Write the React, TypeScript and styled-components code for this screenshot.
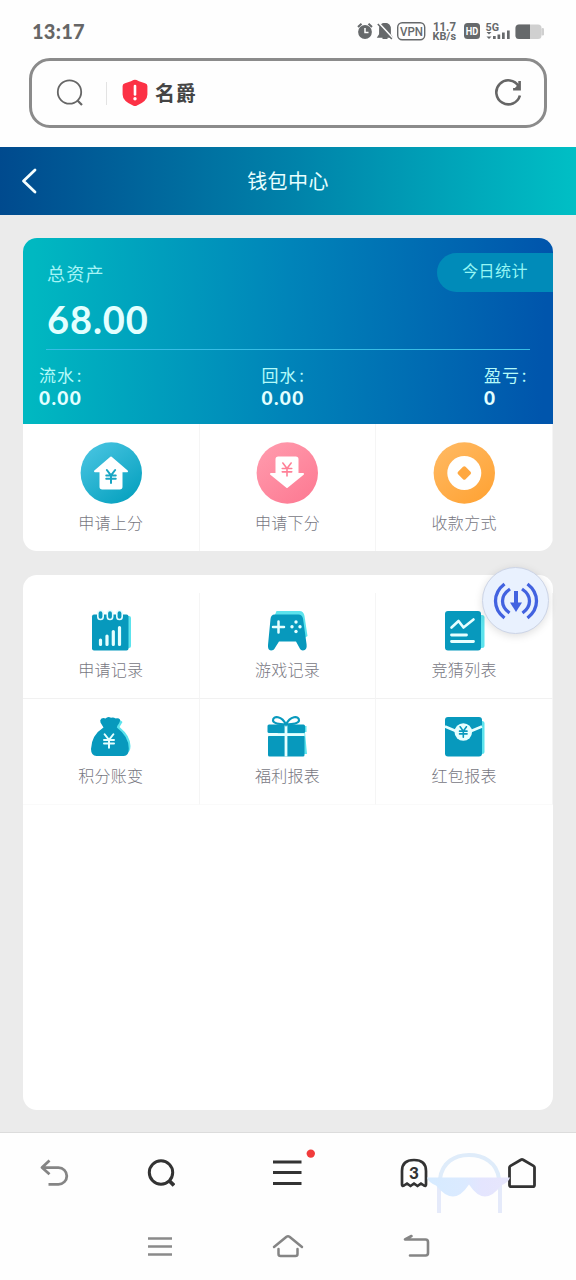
import React from "react";
import styled, { createGlobalStyle } from "styled-components";

const cjk = `"Noto Sans CJK SC", sans-serif`;

const GlobalStyle = createGlobalStyle`
  * { box-sizing: border-box; }
  body { margin: 0; background: #fff; font-family: ${cjk}; }
  svg { display: block; flex: none; }
`;

const Screen = styled.div`
  width: 576px;
  height: 1280px;
  display: flex;
  flex-direction: column;
  overflow: hidden;
  background: #fefefe;
`;

const StatusBar = styled.header`
  height: 58px;
  padding: 4px 31px 0 32px;
  display: flex;
  align-items: center;
  justify-content: space-between;
  color: #666;
`;

const Clock = styled.span`
  font: 900 20px/24px Lato, sans-serif;
  letter-spacing: 0.25px;
  padding-bottom: 1px;
`;

const AddressBar = styled.div`
  height: 70px;
  margin: 0 29px 19px;
  padding: 0 20px 0 24px;
  border: 3px solid #8b8b8b;
  border-radius: 21px;
  display: flex;
  align-items: center;
`;

const Separator = styled.i`
  width: 1px;
  height: 23px;
  margin: 0 15px 0 21px;
  background: #e3e3e3;
`;

const SiteName = styled.span`
  flex: 1;
  margin-left: 7px;
  font: 700 20px/30px ${cjk};
  letter-spacing: 0.8px;
  color: #454545;
`;

const TitleBar = styled.div`
  height: 68px;
  padding: 0 21px;
  display: grid;
  grid-template-columns: 40px 1fr 40px;
  align-items: center;
  background: linear-gradient(90deg, #004a8e 0%, #0081a9 50%, #00bfc5 100%);
`;

const Title = styled.h1`
  margin: 0;
  text-align: center;
  font: 400 20px/30px ${cjk};
  letter-spacing: 0.4px;
  color: #e8ffff;
`;

const Content = styled.main`
  height: 918px;
  padding: 23px 23px 22px;
  display: flex;
  flex-direction: column;
  gap: 24px;
  background: #ebebeb;
  border-bottom: 1px solid #dcdcdc;
`;

const Card = styled.section<{ $grow?: boolean }>`
  position: relative;
  border-radius: 14px;
  background: #fff;
  ${(p) => (p.$grow ? "flex: 1; padding-top: 18px;" : "height: 313px; overflow: hidden;")}
`;

const Balance = styled.div`
  position: relative;
  height: 186px;
  padding: 22px 23px 0;
  background: linear-gradient(92deg, #00b8c1 2%, #0084b9 50%, #0055ac 98%);
`;

const BalanceLabel = styled.div`
  padding-left: 1px;
  font: 400 18px/26px ${cjk};
  letter-spacing: 1.2px;
  color: #a5f4f6;
`;

const BalanceValue = styled.div`
  height: 64px;
  padding: 12px 0 0 1px;
  border-bottom: 1px solid #38bde5;
  font: 700 38px/42px Lato, sans-serif;
  letter-spacing: 0.9px;
  color: #e3ffff;
`;

const TodayButton = styled.button`
  position: absolute;
  top: 15px;
  right: 0;
  width: 116px;
  height: 39px;
  padding: 0 0 6px;
  border: 0;
  border-radius: 20px 0 0 20px;
  background: #008bb9;
  color: #95f6f5;
  font: 400 16px/24px ${cjk};
  letter-spacing: 0.4px;
`;

const Stats = styled.div`
  display: flex;
  justify-content: space-between;
  margin: 13px 0 0 -7px;
`;

const Stat = styled.div`
  font: 400 17px/24px ${cjk};
  letter-spacing: 0.9px;
  color: #b4faf9;
  width: 46px;
  white-space: nowrap;
`;

const Colon = styled.span`
  margin-left: 2px;
`;

const StatValue = styled.div`
  font: 900 19px/22px Lato, sans-serif;
  letter-spacing: 1.4px;
  color: #e3ffff;
`;

const TileGrid = styled.div`
  display: grid;
  grid-template-columns: repeat(3, 1fr);
`;

const Tile = styled.div<{ $large?: boolean }>`
  height: ${(p) => (p.$large ? 127 : 106)}px;
  padding-top: ${(p) => (p.$large ? 18 : 16)}px;
  display: flex;
  flex-direction: column;
  align-items: center;
  gap: ${(p) => (p.$large ? 5 : 3)}px;
  border-right: 1px solid #f5f5f5;
  ${(p) => (p.$large ? "" : "border-bottom: 1px solid #f1f1f1;")}
  &:nth-child(n + 4) { border-bottom-color: #fafafa; }
`;

const TileLabel = styled.span`
  font: 300 16px/26px ${cjk};
  letter-spacing: 0.3px;
  color: #77777f;
`;

const FloatingButton = styled.button`
  position: absolute;
  top: -8px;
  right: 4px;
  width: 67px;
  height: 67px;
  padding: 0;
  border: 1px solid #ccd4e6;
  border-radius: 50%;
  display: grid;
  place-items: center;
  background: #e9f1fe;
  box-shadow: 0 2px 8px rgba(0, 0, 0, 0.13);
`;

const Toolbar = styled.nav`
  position: relative;
  height: 79px;
  display: grid;
  grid-template-columns: 108px 106px 146px 107px 110px;
  justify-items: center;
  align-items: center;
`;

const Glasses = styled.svg`
  position: absolute;
  left: 427px;
  top: 18px;
`;

const SystemNav = styled.nav`
  height: 68px;
  padding: 0 96px;
  display: grid;
  grid-template-columns: repeat(3, 1fr);
  justify-items: center;
  align-items: center;
`;

const dark = "#66696b";
const teal = "#0799bd";
const shade = "#5ce3ed";
const pale = "#e6ffff";

function StatusIcons() {
  return (
    <svg width="188" height="22" viewBox="357 20 188 22">
      <g fill={dark} stroke={dark}>
        <circle cx="365" cy="32" r="6.900" stroke="none" />
        <path d="M358 27l3.500-3.200M372 27l-3.500-3.200" strokeWidth="2" />
        <path d="M365 28v4.500h3.500" fill="none" stroke="#fff" strokeWidth="1.500" />
        <path d="M385 23.500c-3.800 0-5.200 3-5.200 6v5l-1.700 2.500h13.800l-1.700-2.500v-5c0-3-1.400-6-5.200-6zM382.500 38.200h5" strokeWidth="1.400" />
        <path d="M379 23.500l13.500 14.500" stroke="#fff" strokeWidth="2" />
        <path d="M377.800 24l14 15" strokeWidth="1.500" />
        <rect x="397.700" y="22.700" width="27" height="17" rx="4.500" fill="none" strokeWidth="1.400" />
      </g>
      <g fill={dark} fontFamily="Roboto" fontWeight="500">
        <text x="400" y="36" fontSize="13" textLength="23" lengthAdjust="spacingAndGlyphs">VPN</text>
        <text x="433" y="30.500" fontSize="12" fontWeight="700" textLength="23" lengthAdjust="spacingAndGlyphs">11.7</text>
        <text x="432.500" y="40" fontSize="10.500" fontWeight="700" textLength="23.500" lengthAdjust="spacingAndGlyphs">KB/s</text>
        <text x="485.500" y="31" fontSize="10" fontWeight="700" textLength="13.500" lengthAdjust="spacingAndGlyphs">5G</text>
      </g>
      <rect x="464" y="23" width="16" height="16" rx="3.500" fill={dark} />
      <text x="465.800" y="34.800" fontFamily="Roboto" fontWeight="700" fontSize="10.500" textLength="12.500" lengthAdjust="spacingAndGlyphs" fill="#fff">HD</text>
      <g fill={dark}>
        <path d="M486.500 32h5l-2.500 2.500zM486.500 36.500h5l-2.500 2.500z" />
        <rect x="493" y="36" width="2.700" height="3" /><rect x="497.500" y="34.500" width="2.700" height="4.500" />
        <rect x="502" y="32.500" width="2.700" height="6.500" /><rect x="507" y="30.500" width="2.700" height="8.500" />
      </g>
      <rect x="515.500" y="24.500" width="26" height="14.500" rx="3.500" fill="#d0d0d0" />
      <rect x="541.500" y="28" width="2.500" height="7.500" rx="1.200" fill="#d0d0d0" />
      <path d="M530 24.500h-11a3.500 3.500 0 0 0-3.500 3.500v7.500a3.500 3.500 0 0 0 3.500 3.500h11z" fill={dark} />
    </svg>
  );
}

/* Currency mark: a forked stem crossed by two bars, centred on (x, y). */
function Yen({ x, y, w, h, color, stroke }: { x: number; y: number; w: number; h: number; color: string; stroke: number }) {
  const l = x - w / 2;
  const r = x + w / 2;
  const top = y - h / 2;
  const fork = y - h * 0.08;
  return (
    <path
      d={`M${l + 0.6} ${top}L${x} ${fork}L${r - 0.6} ${top}M${x} ${fork}V${y + h / 2}M${l} ${fork}H${r}M${l} ${fork + h * 0.26}H${r}`}
      fill="none" stroke={color} strokeWidth={stroke} strokeLinecap="round" strokeLinejoin="round"
    />
  );
}

const disc = (id: string, from: string, to: string, body: React.ReactNode) => (
  <svg width="62" height="62" viewBox="0 0 62 62">
    <defs>
      <linearGradient id={id} x1="0.150" y1="0.100" x2="0.800" y2="0.950">
        <stop stopColor={from} /><stop offset="1" stopColor={to} />
      </linearGradient>
    </defs>
    <circle cx="31.300" cy="31" r="30.700" fill={`url(#${id})`} />
    {body}
  </svg>
);

const deposit = disc("deposit", "#44c2df", "#08a2c0", <>
  <path d="M31 15.500L47 29.300H41.500V44.800q0 1.700-1.700 1.700H22.200q-1.700 0-1.700-1.700V29.300H15z" fill="#fff" stroke="#fff" strokeWidth="2" strokeLinejoin="round" />
  <Yen x={31} y={34.500} w={9.500} h={13} color="#18a5c3" stroke={2} />
</>);

const withdraw = disc("withdraw", "#ff98ab", "#fd7c94", <>
  <path d="M31 45L47 32H41.500V17.200q0-1.700-1.700-1.700H22.200q-1.700 0-1.700 1.700V32H15z" fill="#fff" stroke="#fff" strokeWidth="2" strokeLinejoin="round" />
  <Yen x={31} y={27.500} w={9.500} h={13} color="#ff8097" stroke={1.6} />
</>);

const payment = disc("payment", "#ffb75e", "#ffa437", <>
  <circle cx="31.300" cy="31" r="17" fill="#fff" />
  <rect x="26" y="25.700" width="10.600" height="10.600" rx="1.800" transform="rotate(45 31.300 31)" fill="#ffa840" />
</>);

const Glyph = ({ children }: { children: React.ReactNode }) => (
  <svg width="42" height="44" viewBox="-0.500 0 42 44">{children}</svg>
);

const calendar = <Glyph>
  <rect x="5" y="7" width="35.500" height="32" rx="2" fill={shade} />
  <rect x="1.500" y="5.500" width="36.500" height="36" rx="2" fill={teal} />
  {[10, 19.500, 29].map((x) => <rect key={x} x={x - 2.700} y="1.500" width="5.400" height="9" rx="2.700" fill={teal} stroke="#e5fdff" strokeWidth="1.600" />)}
  <path d="M10 35.500v-4.500M16.500 35.500v-8.500M22.800 35.500v-13M29 35.500v-17" stroke={pale} strokeWidth="3.200" strokeLinecap="round" />
</Glyph>;

const gamepad = <Glyph>
  <path d="M10 2h23q4 0 5 5l3 20-6 4L6 12z" fill={shade} />
  <path d="M8 5.500h24q3.500 0 4.500 4l3.600 26q.700 5.500-3.600 6-2.500 0-4-3.500l-3-5.500h-17l-3.500 5.500Q7.500 41.500 4.500 41.500 1 41 1.500 36L4 10q.500-4.500 4-4.500z" fill={teal} />
  <path d="M12 12.500v11M6.500 18h11" stroke={pale} strokeWidth="2.500" strokeLinecap="round" />
  <g fill={pale}><circle cx="29.500" cy="13" r="1.700" /><circle cx="29.500" cy="22.500" r="1.700" /><circle cx="25.500" cy="17.800" r="1.700" /><circle cx="33.500" cy="17.800" r="1.700" /></g>
</Glyph>;

const chart = <Glyph>
  <rect x="6" y="6" width="35" height="33" rx="2.500" fill={shade} />
  <rect x="1.500" y="2" width="36" height="39.500" rx="3" fill={teal} />
  <path d="M8 18.500l7-6.500 5 6.500 10-8" fill="none" stroke={pale} strokeWidth="2.600" strokeLinecap="round" strokeLinejoin="round" />
  <path d="M8 26h15M8 32.500h22" stroke={pale} strokeWidth="2.800" strokeLinecap="round" />
</Glyph>;

const moneyBag = <Glyph>
  <path d="M14 5q13-4 18 2l-3 5q11 9 11 19 0 7-5 7.500L16 37z" fill={shade} />
  <path d="M13 12.500L10 7.500q-1-2.500 1-4 2-.800 4 0 2.500-2.800 5.500-.700 2.500-1 4.500.700 3-1 4.500 1 .500 2-2.500 6l-.700 2q12 9 12 21 0 7.500-5 7.500H6Q.500 40.500.500 34 1 20 13 12.500z" fill={teal} />
  <Yen x={18.5} y={26} w={10} h={13.5} color={pale} stroke={2} />
</Glyph>;

const gift = <Glyph>
  <path d="M8 11h32v6h-1.500l2 22H20z" fill={shade} />
  <rect x="1" y="9.500" width="37.500" height="8.500" rx="1.500" fill={teal} />
  <rect x="1.500" y="20.500" width="36.500" height="21" rx="1.500" fill={teal} />
  <path d="M1.500 19.600h36.500M19.500 10v31.500" stroke={pale} strokeWidth="2.800" />
  <path d="M19.500 9.500C15.500 1 6.500 0 6.500 5.500q0 3.500 13 4 13-.500 13-4c0-5.500-9-4.500-13 4z" fill="#fff" stroke={teal} strokeWidth="2.200" />
</Glyph>;

const envelope = <Glyph>
  <rect x="6" y="6" width="35" height="33" rx="2.500" fill={shade} />
  <rect x="1.500" y="2" width="37" height="39.500" rx="3" fill={teal} />
  <path d="M1.500 11.500l12 5M38.500 11.500l-12 5" stroke={pale} strokeWidth="2.500" />
  <circle cx="19.800" cy="17" r="8.800" fill={pale} />
  <Yen x={19.8} y={17} w={7.5} h={10.5} color={teal} stroke={1.6} />
</Glyph>;

const actions = [
  { label: "申请上分", icon: deposit },
  { label: "申请下分", icon: withdraw },
  { label: "收款方式", icon: payment },
];

const reports = [
  { label: "申请记录", icon: calendar },
  { label: "游戏记录", icon: gamepad },
  { label: "竞猜列表", icon: chart },
  { label: "积分账变", icon: moneyBag },
  { label: "福利报表", icon: gift },
  { label: "红包报表", icon: envelope },
];

const stats = [
  { label: "流水", value: "0.00" },
  { label: "回水", value: "0.00" },
  { label: "盈亏", value: "0" },
];

export default function App() {
  return (
    <Screen>
      <GlobalStyle />
      <StatusBar>
        <Clock>13:17</Clock>
        <StatusIcons />
      </StatusBar>

      <AddressBar>
        <svg width="29" height="30" viewBox="0 0 29 30" fill="none" stroke="#666" strokeWidth="1.800">
          <circle cx="13.500" cy="14" r="11.700" /><path d="M21.500 22.500l4.500 4.500" strokeWidth="2.200" />
        </svg>
        <Separator />
        <svg width="26" height="28" viewBox="0 0 26 28">
          <path d="M13 .800q1.200 0 4 1.400l6 2q2.400.700 2.400 2.800v8.500q0 6.500-10.400 11-2 1-4 0Q.600 22 .600 15.500V7q0-2.100 2.400-2.800l6-2Q11.800.800 13 .800z" fill="#fc3145" />
          <path d="M13 7v8.500" stroke="#fff" strokeWidth="2.600" strokeLinecap="round" /><circle cx="13" cy="19.700" r="1.700" fill="#fff" />
        </svg>
        <SiteName>名爵</SiteName>
        <svg width="30" height="30" viewBox="0 0 30 30" fill="none" stroke="#666" strokeWidth="2.600">
          <path d="M24.700 8.300A12 12 0 1 0 25.900 17.500" /><path d="M25.600 3v8.200h-6.500" /><path d="M25.500 5v6h-5.500z" fill="#666" stroke="none" />
        </svg>
      </AddressBar>

      <TitleBar>
        <svg width="17" height="26" viewBox="0 0 17 26" fill="none" stroke="#f5ffff" strokeWidth="2.800" strokeLinecap="round" strokeLinejoin="round">
          <path d="M14 2L2.500 13 14 24" />
        </svg>
        <Title>钱包中心</Title>
      </TitleBar>

      <Content>
        <Card>
          <Balance>
            <BalanceLabel>总资产</BalanceLabel>
            <BalanceValue>68.00</BalanceValue>
            <Stats>
              {stats.map((s) => (
                <Stat key={s.label}>{s.label}<Colon>:</Colon><StatValue>{s.value}</StatValue></Stat>
              ))}
            </Stats>
            <TodayButton>今日统计</TodayButton>
          </Balance>
          <TileGrid>
            {actions.map((a) => (
              <Tile key={a.label} $large>{a.icon}<TileLabel>{a.label}</TileLabel></Tile>
            ))}
          </TileGrid>
        </Card>

        <Card $grow>
          <TileGrid>
            {reports.map((r) => (
              <Tile key={r.label}>{r.icon}<TileLabel>{r.label}</TileLabel></Tile>
            ))}
          </TileGrid>
          <FloatingButton aria-label="download">
            <svg width="46" height="38" viewBox="0 0 46 38" fill="none" stroke="#4262e0" strokeWidth="3.300">
              <path d="M11.500 2Q2.500 9 2.500 19t9 17M34.500 2Q43.500 9 43.500 19t-9 17" />
              <path d="M17 7Q9.500 12 9.500 19t7 12M29 7Q36.500 12 36.500 19t-7 12" />
              <path d="M23 9v14" strokeWidth="4" /><path d="M17 20.500h12L23 30z" fill="#4262e0" stroke="none" />
            </svg>
          </FloatingButton>
        </Card>
      </Content>

      <Toolbar>
        <Glasses width="84" height="63" viewBox="0 0 84 63">
          <defs>
            <linearGradient id="lens" gradientUnits="userSpaceOnUse" x1="0" y1="0" x2="84" y2="0">
              <stop stopColor="#d6ebff" /><stop offset="0.450" stopColor="#dbeaff" /><stop offset="0.650" stopColor="#e4e5fe" /><stop offset="1" stopColor="#e7e6fc" />
            </linearGradient>
          </defs>
          <path d="M13 28C15 11 28 4 42 4s28 7 30 24" fill="none" stroke="#dfecfa" strokeWidth="4" />
          <path d="M12 33v29M73 33v29" stroke="#e5eafa" strokeWidth="4" />
          <path d="M0 26.500h83q-1 4.500-9 8-8 11-16 11-8 0-16-12-8 12-16 12-8 0-17-11-8-3.500-9-8z" fill="url(#lens)" />
        </Glasses>
        <svg width="30" height="28" viewBox="0 0 30 28" fill="none" stroke="#858585" strokeWidth="2.800" strokeLinejoin="round">
          <path d="M10.500 1.500L3 8.500l7.500 6.800M3 8.700h16.500a8.300 8.300 0 0 1 0 16.600h-10" />
        </svg>
        <svg width="28" height="28" viewBox="0 0 28 28" fill="none" stroke="#333" strokeWidth="3">
          <circle cx="14" cy="13.500" r="11.700" /><path d="M22 21.500l5 5" strokeWidth="3.800" />
        </svg>
        <svg width="60" height="48" viewBox="-2 -3 60 48" stroke="#333" strokeWidth="2.800">
          <path d="M14 10h28.500M14 20.500h28.500M14 31.500h28.500" /><circle cx="51.800" cy="1.600" r="4.200" fill="#f13b3b" stroke="none" />
        </svg>
        <svg width="28" height="30" viewBox="0 0 28 30">
          <path d="M2 26.500V13C2 5 7 2 14 2s12 3 12 11v13.500q0 2-2 1l-3-2-3.500 2.500L14 25.500 10.500 28 7 25.500l-3 2q-2 1-2-1z" fill="#fff" stroke="#333" strokeWidth="2.700" strokeLinejoin="round" />
          <text x="14" y="20.800" fontFamily="Lato" fontWeight="900" fontSize="17" textAnchor="middle" fill="#333">3</text>
        </svg>
        <svg width="30" height="32" viewBox="0 0 30 32" fill="none" stroke="#333" strokeWidth="2.800" strokeLinejoin="round">
          <path d="M2.500 10.500q0-1 1-1.600L14 2.700q1-.600 2 0l10.500 6.200q1 .600 1 1.600V28q0 1.700-1.700 1.700H4.200Q2.500 29.700 2.500 28z" />
        </svg>
      </Toolbar>

      <SystemNav>
        <svg width="24" height="22" viewBox="0 0 24 22" stroke="#8a8a8a" strokeWidth="2.600">
          <path d="M0 3.500h24M0 11.500h24M0 19.500h24" />
        </svg>
        <svg width="32" height="24" viewBox="0 0 32 24" fill="none" stroke="#858585" strokeWidth="2.500" strokeLinecap="round" strokeLinejoin="round">
          <path d="M2 13L14.500 2.800q1.500-1 3 0L30 13M6.500 15v5q0 2 2 2h15q2 0 2-2v-5" />
        </svg>
        <svg width="27" height="24" viewBox="0 0 27 24" fill="none" stroke="#858585" strokeWidth="2.600" strokeLinecap="round" strokeLinejoin="round">
          <path d="M8.500 2L2 5.500h20.500q2.500 0 2.500 2.500v11q0 2.500-2.500 2.500H7" />
        </svg>
      </SystemNav>
    </Screen>
  );
}
